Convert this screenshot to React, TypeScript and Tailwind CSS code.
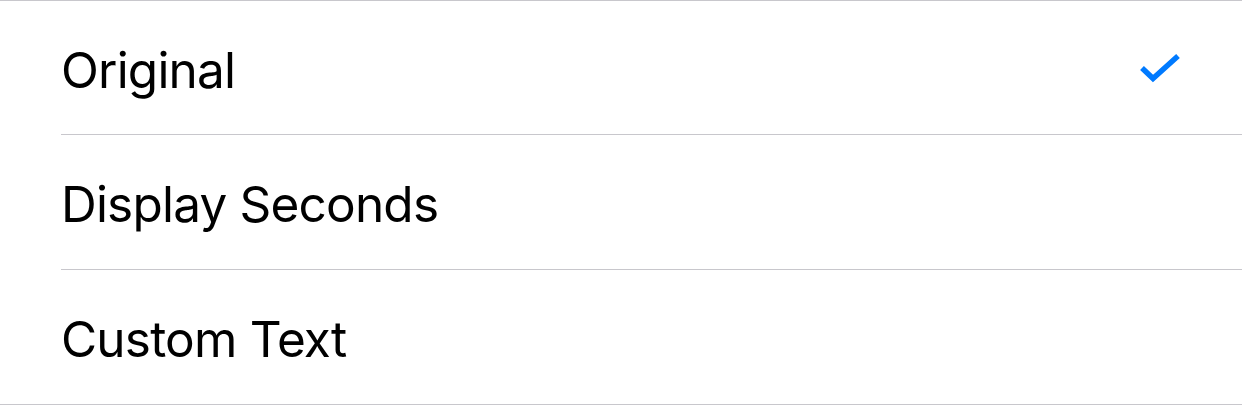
export default function App() {
  const options = [
    { label: "Original", selected: true },
    { label: "Display Seconds", selected: false },
    { label: "Custom Text", selected: false },
  ];

  const heights = ["h-[134px]", "h-[135px]", "h-[134px]"];

  return (
    <main className="w-[1242px] h-[405px] bg-white" style={{ fontFamily: "Inter, 'Noto Sans', sans-serif" }}>
      <ul className="border-t border-b border-[#c8c7cc]">
        {options.map((option, i) => (
          <li key={option.label} className="pl-[61px]">
            <div
              className={`flex items-center justify-between pr-[62px] pt-[6px] ${heights[i]} ${
                i < options.length - 1 ? "border-b border-[#c8c7cc]" : ""
              }`}
            >
              <span className="text-[49.5px] leading-none text-black tracking-[-0.8px]">{option.label}</span>
              {option.selected && (
                <svg width="40" height="30" viewBox="0 0 40 30" className="-mt-[5px]">
                  <path d="M2 15 L13 25.5 L38 3" fill="none" stroke="#007aff" strokeWidth="5.5" />
                </svg>
              )}
            </div>
          </li>
        ))}
      </ul>
    </main>
  );
}
